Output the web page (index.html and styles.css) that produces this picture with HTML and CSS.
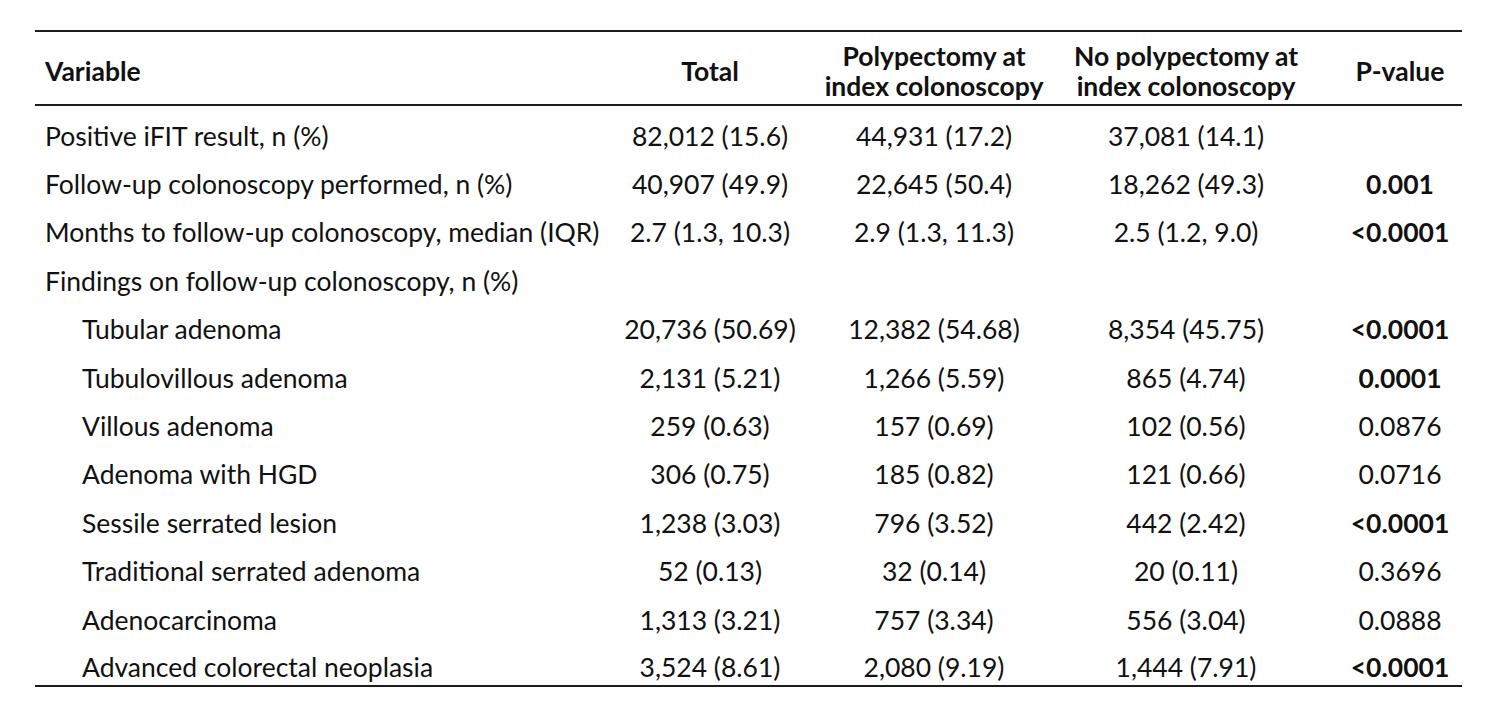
FILE: index.html
```html
<!DOCTYPE html>
<html>
<head>
<meta charset="utf-8">
<link rel="stylesheet" href="styles.css">
</head>
<body>
<table class="data">
  <colgroup>
    <col class="c-var"><col class="c-total"><col class="c-poly"><col class="c-nopoly"><col class="c-p">
  </colgroup>
  <thead>
    <tr>
      <th class="left">Variable</th>
      <th>Total</th>
      <th>Polypectomy at<br>index colonoscopy</th>
      <th>No polypectomy at<br>index colonoscopy</th>
      <th class="pv">P-value</th>
    </tr>
  </thead>
  <tbody>
    <tr><td class="left">Positive iFIT result, n (%)</td><td>82,012 (15.6)</td><td>44,931 (17.2)</td><td>37,081 (14.1)</td><td class="pv"></td></tr>
    <tr><td class="left">Follow-up colonoscopy performed, n (%)</td><td>40,907 (49.9)</td><td>22,645 (50.4)</td><td>18,262 (49.3)</td><td class="pv b">0.001</td></tr>
    <tr><td class="left">Months to follow-up colonoscopy, median (IQR)</td><td>2.7 (1.3, 10.3)</td><td>2.9 (1.3, 11.3)</td><td>2.5 (1.2, 9.0)</td><td class="pv b">&lt;0.0001</td></tr>
    <tr><td class="left">Findings on follow-up colonoscopy, n (%)</td><td></td><td></td><td></td><td class="pv"></td></tr>
    <tr><td class="left ind">Tubular adenoma</td><td>20,736 (50.69)</td><td>12,382 (54.68)</td><td>8,354 (45.75)</td><td class="pv b">&lt;0.0001</td></tr>
    <tr><td class="left ind">Tubulovillous adenoma</td><td>2,131 (5.21)</td><td>1,266 (5.59)</td><td>865 (4.74)</td><td class="pv b">0.0001</td></tr>
    <tr><td class="left ind">Villous adenoma</td><td>259 (0.63)</td><td>157 (0.69)</td><td>102 (0.56)</td><td class="pv">0.0876</td></tr>
    <tr><td class="left ind">Adenoma with HGD</td><td>306 (0.75)</td><td>185 (0.82)</td><td>121 (0.66)</td><td class="pv">0.0716</td></tr>
    <tr><td class="left ind">Sessile serrated lesion</td><td>1,238 (3.03)</td><td>796 (3.52)</td><td>442 (2.42)</td><td class="pv b">&lt;0.0001</td></tr>
    <tr><td class="left ind">Traditional serrated adenoma</td><td>52 (0.13)</td><td>32 (0.14)</td><td>20 (0.11)</td><td class="pv">0.3696</td></tr>
    <tr><td class="left ind">Adenocarcinoma</td><td>1,313 (3.21)</td><td>757 (3.34)</td><td>556 (3.04)</td><td class="pv">0.0888</td></tr>
    <tr><td class="left ind">Advanced colorectal neoplasia</td><td>3,524 (8.61)</td><td>2,080 (9.19)</td><td>1,444 (7.91)</td><td class="pv b">&lt;0.0001</td></tr>
  </tbody>
</table>
</body>
</html>
```
FILE: styles.css
```css
html, body {
  margin: 0;
  padding: 0;
  background: #ffffff;
}
body {
  padding: 30px 0 0 35px;
  font-family: Lato, "Open Sans", sans-serif;
  color: #111111;
}
.data {
  width: 1427px;
  border-collapse: collapse;
  table-layout: fixed;
  font-size: 26.5px;
}
.c-var { width: 580px; }
.c-total { width: 190px; }
.c-poly { width: 258px; }
.c-nopoly { width: 246px; }
.c-p { width: 153px; }
.data thead tr {
  border-top: 2px solid #1c1c1c;
  border-bottom: 2px solid #1c1c1c;
}
.data tbody tr:last-child {
  border-bottom: 2px solid #1c1c1c;
}
.data th {
  font-weight: 700;
  text-align: center;
  line-height: 30px;
  height: 74px;
  padding: 5px 0 0 0;
  vertical-align: middle;
  box-sizing: border-box;
}
.data td {
  text-align: center;
  height: 48.4px;
  padding: 13px 0 0 0;
  line-height: 30px;
  vertical-align: middle;
  box-sizing: border-box;
}
.data .left {
  text-align: left;
  padding-left: 10px;
}
.data td.ind {
  padding-left: 47px;
}
.data .pv {
  padding-left: 29px;
}
.data .b {
  font-weight: 700;
}
```
